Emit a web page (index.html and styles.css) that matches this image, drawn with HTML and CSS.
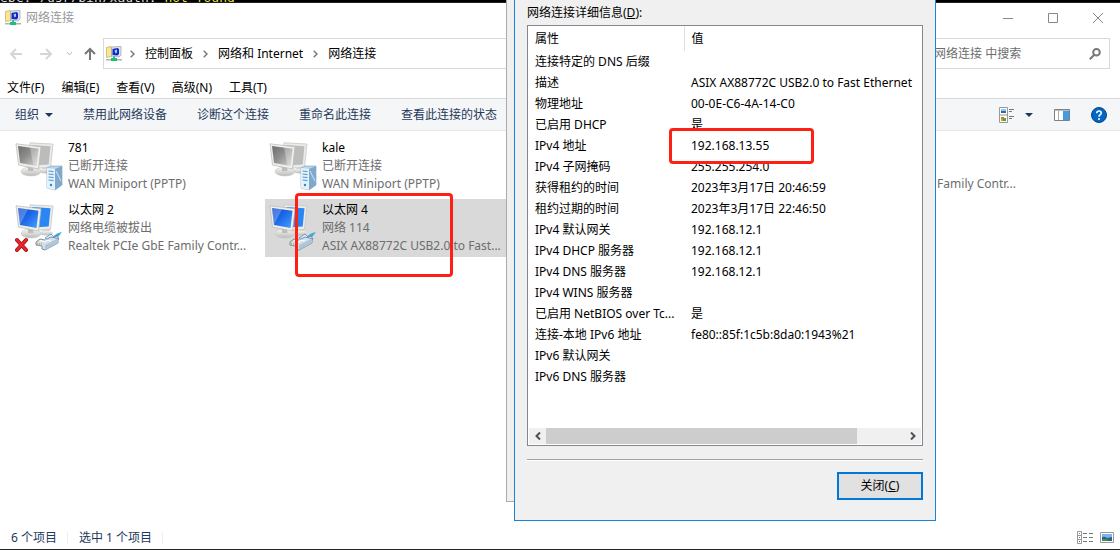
FILE: index.html
```html
<!DOCTYPE html>
<html lang="zh-CN">
<head>
<meta charset="utf-8">
<title>网络连接</title>
<link rel="stylesheet" href="styles.css">
</head>
<body>
<svg class="defs" aria-hidden="true">
  <defs>
    <linearGradient id="blue" x1="0" y1="0" x2="1" y2="1"><stop offset="0" stop-color="#0a48c8"/><stop offset=".45" stop-color="#1c66e8"/><stop offset="1" stop-color="#45a2ff"/></linearGradient>
    <linearGradient id="grey" x1="0" y1="0" x2="1" y2="1"><stop offset="0" stop-color="#6c6c6c"/><stop offset=".45" stop-color="#8e8e8e"/><stop offset="1" stop-color="#d4d4d4"/></linearGradient>
    <linearGradient id="base" x1="0" y1="0" x2="0" y2="1"><stop offset="0" stop-color="#f7f7f5"/><stop offset="1" stop-color="#bcbcba"/></linearGradient>
    <symbol id="net" viewBox="0 0 16 16">
      <path d="M.5 1.500l4.500-1 1 1v9l-5.500 1z" fill="#f8e596" stroke="#c9a94a" stroke-width=".7"/>
      <path d="M5.500 1l9.500-.7v8.700l-2 2-7.500-1z" fill="#dde2ea" stroke="#98a0ae" stroke-width=".7"/>
      <path d="M6.500 3l5-1 1.500 1v5l-1.500 1.500-5-.5z" fill="#1428c8"/>
      <path d="M8.500 4.500l2.500-1v3l-1.500 1z" fill="#9cd8ff"/>
      <path d="M7 10.500h2v1.500h2v3H5v-3h2z" fill="#19c07e"/>
      <path d="M0 13h5v1.500H0zM11 13h5v1.500h-5z" fill="#a9b3b3"/>
    </symbol>
    <symbol id="screens" viewBox="0 0 48 50">
      <path d="M28 24h6l1 5h-8z" fill="#c8c8c6"/>
      <ellipse cx="31" cy="29" rx="7" ry="2.500" fill="url(#base)"/>
      <path d="M15 .8l23 1.200-2.500 23.500-20.500 1z" fill="#ebebe8" stroke="#c2c2bf" stroke-width=".7"/>
      <path d="M17 3l18.500 1.200-1.800 18.300-16.700 1z" fill="currentColor"/>
      <path d="M12 23h8l1 7h-9z" fill="#d0d0cd"/>
      <ellipse cx="16" cy="29.500" rx="10" ry="4.500" fill="url(#base)" stroke="#c4c4c1" stroke-width=".5"/>
      <path d="M13 24h5l.5 5h-5.500z" fill="#bdbdba"/>
      <path d="M1 1.800l25 3-2.500 22.200L3.500 23z" fill="#efefec" stroke="#b8b8b5" stroke-width=".7"/>
    </symbol>
    <symbol id="server" viewBox="0 0 48 50">
      <path d="M32 26l4-2h11v19l-7 5-8-2z" fill="#b9d5ea" stroke="#7f9cb8" stroke-width=".6"/>
      <path d="M32 26l8 1v21l-8-2z" fill="#e6f2fb"/>
      <path d="M40 27l7-3v19l-7 5z" fill="#7fa9cc"/>
      <path d="M33.500 29l5 .6M33.500 32l5 .6M33.500 35l5 .6M33.500 38l5 .6" stroke="#55a2d6" stroke-width="1.200"/>
      <circle cx="36" cy="43" r="1.200" fill="#3288c7"/>
      <path d="M41 29l5 10" stroke="#cfe5f5"/>
    </symbol>
    <symbol id="plug" viewBox="0 0 48 50">
      <path d="M38 33q3-4 9-5l-4 5-3 2z" fill="#35a9de"/>
      <path d="M30 34l6-4 3 3 3-1 2 3-8 3z" fill="#e2eff8" stroke="#5c86ad" stroke-width=".8"/>
      <path d="M21 38l4-3 5 1 6-3 7 1.500v4.500l-13 7-3-1v-3l-6-1z" fill="#d5e0ea" stroke="#587693" stroke-width=".8"/>
      <path d="M30 41l13-6.500v4.500l-13 7z" fill="#b0c5d8"/>
      <path d="M25 36.500l6 1.500M30 36l6 1" stroke="#fff" stroke-width="1.200"/>
      <path d="M22.500 38.500v2.500M24.500 39v2.500M26.500 39v3" stroke="#c5b65e" stroke-width=".9"/>
    </symbol>
    <symbol id="dev-off" viewBox="0 0 48 50">
      <use href="#screens" width="48" height="50" color="#bcbcbc"/>
      <path d="M3 4l20.500 2.700-2 17.300L5 21z" fill="url(#grey)"/><path d="M15 5.600l8.500 1.100-2 17.300-3-.5z" fill="#fff" opacity=".3"/>
      <use href="#server" width="48" height="50"/>
    </symbol>
    <symbol id="dev-on" viewBox="0 0 48 50">
      <use href="#screens" width="48" height="50" color="#2a86f4"/>
      <path d="M3 4l20.500 2.700-2 17.300L5 21z" fill="url(#blue)"/><path d="M3 4l10 1.300L7 17l-2 4z" fill="#fff" opacity=".25"/>
      <use href="#plug" width="48" height="50"/>
    </symbol>
    <symbol id="sep" viewBox="0 0 5 8"><path d="M.7.700L4 4 .7 7.300" fill="none" stroke="#777" stroke-width="1.400"/></symbol>
    <symbol id="tri" viewBox="0 0 8 4"><path d="M0 0h8L4 4z" fill="#1e395b"/></symbol>
  </defs>
</svg>

<div class="terminal">ebc: /usr/bin/xauth: <span class="warn">not found</span></div>

<main class="explorer">
  <header class="titlebar">
    <svg class="net"><use href="#net"/></svg>
    <span class="title">网络连接</span>
    <button class="winbtn" aria-label="最小化"><svg viewBox="0 0 12 12"><path d="M1 6.500h10"/></svg></button>
    <button class="winbtn" aria-label="最大化"><svg viewBox="0 0 12 12"><path d="M1.500 1.500h9v9h-9z"/></svg></button>
    <button class="winbtn" aria-label="关闭窗口"><svg viewBox="0 0 12 12"><path d="M1 1l10 10M11 1L1 11"/></svg></button>
  </header>

  <div class="navbar">
    <button class="nav" aria-label="后退"><svg width="12" height="12" viewBox="0 0 12 12"><path d="M12 6H1M6 1L1 6l5 5" stroke="#d6d6d6"/></svg></button>
    <button class="nav" aria-label="前进"><svg width="12" height="12" viewBox="0 0 12 12"><path d="M0 6h11M6 1l5 5-5 5" stroke="#d6d6d6"/></svg></button>
    <button class="nav recent" aria-label="最近"><svg width="7" height="6" viewBox="0 0 7 6"><path d="M1 1l2.500 3L6 1" stroke="#bbb"/></svg></button>
    <button class="nav up" aria-label="上移"><svg width="12" height="14" viewBox="0 0 12 14"><path d="M6 13V2M1 7l5-5 5 5" stroke="#777" stroke-width="2"/></svg></button>
    <nav class="address">
      <svg class="net"><use href="#net"/></svg>
      <svg class="sep"><use href="#sep"/></svg>
      <a href="#">控制面板</a>
      <svg class="sep"><use href="#sep"/></svg>
      <a href="#">网络和 Internet</a>
      <svg class="sep"><use href="#sep"/></svg>
      <a href="#">网络连接</a>
    </nav>
    <label class="search">
      <input type="text" placeholder="在 网络连接 中搜索" aria-label="搜索">
      <svg width="12" height="12" viewBox="0 0 12 12"><circle cx="7.500" cy="4.300" r="3.300"/><path d="M5 7L.8 11.200"/></svg>
    </label>
  </div>

  <div class="menubar">
    <button>文件(F)</button><button>编辑(E)</button><button>查看(V)</button><button>高级(N)</button><button>工具(T)</button>
  </div>

  <div class="toolbar">
    <button class="organize">组织 <svg class="tri"><use href="#tri"/></svg></button>
    <button>禁用此网络设备</button>
    <button>诊断这个连接</button>
    <button>重命名此连接</button>
    <button>查看此连接的状态</button>
    <div class="tools">
      <button class="views" aria-label="更改视图">
        <svg width="16" height="16" viewBox="0 0 16 16"><path d="M.5.500h8v15h-8zM.5 8h8" fill="#fff" stroke="#999"/><path d="M2 2h5v2H2z" fill="#8ec5f2"/><path d="M2 4h5v2H2z" fill="#2b6c9c"/><path d="M2 10h3v2H2z" fill="#d2793a"/><path d="M4 11h3v3H4z" fill="#5ca52d"/><path d="M2 12h2v2H2z" fill="#d1a626"/><path d="M10 2.500h5M10 4.500h3M10 9.500h5M10 11.500h3" stroke="#777"/></svg>
        <svg class="tri"><use href="#tri"/></svg>
      </button>
      <button aria-label="预览窗格"><svg width="16" height="12" viewBox="0 0 16 12"><path d="M.5.500h15v11H.5z" fill="#fff" stroke="#808080"/><path d="M1 1h14" stroke="#808080"/><path d="M4.500 2v9" stroke="#aaa"/><path d="M9 2h6v9H9z" fill="#429ce3"/></svg></button>
      <button aria-label="帮助"><svg width="16" height="16" viewBox="0 0 16 16"><circle cx="8" cy="8" r="7.500" fill="#0067c5" stroke="#094584"/><path d="M5.800 6.200Q5.800 4 8 4t2.200 2Q10.200 7.200 8.900 8 8 8.600 8 9.800" fill="none" stroke="#fff" stroke-width="1.600"/><circle cx="8" cy="12" r="1" fill="#fff"/></svg></button>
    </div>
  </div>

  <section class="items">
    <article class="tile"><svg class="dev"><use href="#dev-off"/></svg><div><h2>781</h2><p>已断开连接</p><p>WAN Miniport (PPTP)</p></div></article>
    <article class="tile"><svg class="dev"><use href="#dev-off"/></svg><div><h2>kale</h2><p>已断开连接</p><p>WAN Miniport (PPTP)</p></div></article>
    <article class="tile"></article>
    <article class="tile last"><p>Realtek PCIe GbE Family Contr...</p></article>
    <article class="tile"><svg class="dev"><use href="#dev-on"/><path d="M2 36l9 10M11 36L2 46" stroke="#a90d12" stroke-width="4" stroke-linecap="round"/><path d="M2 36l9 10M11 36L2 46" stroke="#e8262c" stroke-width="2.500" stroke-linecap="round"/></svg><div><h2>以太网 2</h2><p>网络电缆被拔出</p><p>Realtek PCIe GbE Family Contr...</p></div></article>
    <article class="tile selected"><svg class="dev"><use href="#dev-on"/></svg><div><h2>以太网 4</h2><p>网络 114</p><p>ASIX AX88772C USB2.0 to Fast...</p></div></article>
  </section>

  <footer class="status">
    <span>6 个项目</span>
    <span>选中 1 个项目</span>
    <div class="modes">
      <button aria-label="详细信息"><svg width="16" height="13" viewBox="0 0 16 13"><path d="M.5.500h4v12h-4zM.5 4.500h4M.5 8.500h4" fill="#fff" stroke="#999"/><path d="M2 2.500h1" stroke="#4a9"/><path d="M2 6.500h1" stroke="#38c"/><path d="M2 10.500h1" stroke="#c22"/><path d="M6 2.500h4M12 2.500h4M6 6.500h4M12 6.500h4M6 10.500h4M12 10.500h4" stroke="#777"/></svg></button>
      <button aria-label="大图标"><svg width="14" height="11" viewBox="0 0 14 11"><path d="M.5.500h13v10H.5z" fill="#fff" stroke="#999"/><path d="M2 2h10v4H2z" fill="#79b4f5"/><path d="M2 5q3-1 5 1l5-1v4H2z" fill="#2d6385"/><path d="M2 7h6l-1 2H2z" fill="#4b8a53"/></svg></button>
    </div>
  </footer>
</main>

<div class="backdialog"></div>

<section class="dialog">
  <h1>网络连接详细信息(<u>D</u>):</h1>
  <div class="list">
    <table>
      <thead><tr><th>属性</th><th>值</th></tr></thead>
      <tbody>
        <tr><td>连接特定的 DNS 后缀</td><td></td></tr>
        <tr><td>描述</td><td>ASIX AX88772C USB2.0 to Fast Ethernet</td></tr>
        <tr><td>物理地址</td><td>00-0E-C6-4A-14-C0</td></tr>
        <tr><td>已启用 DHCP</td><td>是</td></tr>
        <tr><td>IPv4 地址</td><td>192.168.13.55</td></tr>
        <tr><td>IPv4 子网掩码</td><td>255.255.254.0</td></tr>
        <tr><td>获得租约的时间</td><td>2023年3月17日 20:46:59</td></tr>
        <tr><td>租约过期的时间</td><td>2023年3月17日 22:46:50</td></tr>
        <tr><td>IPv4 默认网关</td><td>192.168.12.1</td></tr>
        <tr><td>IPv4 DHCP 服务器</td><td>192.168.12.1</td></tr>
        <tr><td>IPv4 DNS 服务器</td><td>192.168.12.1</td></tr>
        <tr><td>IPv4 WINS 服务器</td><td></td></tr>
        <tr><td>已启用 NetBIOS over Tc...</td><td>是</td></tr>
        <tr><td>连接-本地 IPv6 地址</td><td>fe80::85f:1c5b:8da0:1943%21</td></tr>
        <tr><td>IPv6 默认网关</td><td></td></tr>
        <tr><td>IPv6 DNS 服务器</td><td></td></tr>
      </tbody>
    </table>
    <div class="scrollbar">
      <button aria-label="向左滚动"><svg width="6" height="8" viewBox="0 0 6 8"><path d="M5 .5L1.500 4 5 7.500"/></svg></button>
      <div class="track"><div class="thumb"></div></div>
      <button aria-label="向右滚动"><svg width="6" height="8" viewBox="0 0 6 8"><path d="M1 .5L4.500 4 1 7.500"/></svg></button>
    </div>
  </div>
  <hr>
  <button class="close">关闭(<u>C</u>)</button>
</section>

<div class="mark mark-adapter"></div>
<div class="mark mark-address"></div>
</body>
</html>
```

FILE: styles.css
```css
* { box-sizing: border-box; }
body {
  margin: 0;
  min-height: 100vh;
  display: flex;
  flex-direction: column;
  position: relative;
  overflow: hidden;
  background: #fff;
  color: #000;
  font: 12px/18px "Noto Sans", "Noto Sans CJK SC", sans-serif;
}
button { border: 0; padding: 0; background: none; color: inherit; font: inherit; white-space: nowrap; }
svg { display: block; flex: none; fill: none; }
h1, h2, p { margin: 0; font-size: 12px; font-weight: 400; }
a { color: inherit; text-decoration: none; }
.defs { position: absolute; width: 0; height: 0; }

.terminal {
  height: 3px;
  display: flex;
  align-items: flex-end;
  overflow: hidden;
  background: #000;
  border-bottom: 1px solid #222;
  color: #ddd;
  font: 13px/8px "DejaVu Sans Mono", monospace;
  white-space: pre;
}
.warn { color: #e8e337; }

.explorer { flex: 1; display: flex; flex-direction: column; border-bottom: 1px solid #222; }
.net { width: 16px; height: 16px; }

.titlebar { height: 35px; padding: 0 10px 6px 5px; display: flex; align-items: center; color: #999; }
.title { flex: 1; margin-left: 5px; }
.winbtn { width: 45px; display: flex; justify-content: flex-end; }
.winbtn svg { width: 12px; height: 12px; margin-right: 6px; stroke: #888; }

.navbar { display: flex; align-items: stretch; padding: 0 10px; height: 31px; }
.nav { width: 30px; display: flex; align-items: center; }
.nav svg { stroke-width: 2; }
.nav.recent { width: 14px; }
.nav.recent svg { stroke-width: 1; }
.nav.up { width: 19px; }
.nav.recent svg { margin-left: -4px; }
.address { flex: 1; display: flex; align-items: center; padding-left: 2px; border: 1px solid #d9d9d9; white-space: nowrap; }
.sep { width: 5px; height: 8px; margin: 0 10px; }
.address .net + .sep { margin-left: 8px; }
.search { width: 200px; margin-left: 6px; display: flex; align-items: center; padding: 0 8px; border: 1px solid #d9d9d9; }
.search input { flex: 1; min-width: 0; padding: 0; border: 0; outline: 0; font: inherit; background: none; }
.search input::placeholder { color: #6d6d6d; opacity: 1; }
.search svg { stroke: #777; stroke-width: 2; }

.menubar { display: flex; gap: 17px; height: 29px; padding: 10px 7px 1px; }

.toolbar {
  display: flex;
  align-items: center;
  gap: 30px;
  height: 33px;
  padding: 0 13px 0 15px;
  background: #f5f6f7;
  border-top: 1px solid #d8d8d8;
  border-bottom: 1px solid #e5e7ea;
  color: #1e395b;
}
.tri { width: 8px; height: 4px; }
.organize, .views { display: flex; align-items: center; gap: 6px; }
.views { gap: 10px; }
.tools { margin-left: auto; display: flex; align-items: center; gap: 21px; }

.items { flex: 1; display: grid; grid-template-columns: repeat(4, 254px); grid-auto-rows: 58px; row-gap: 4px; padding: 6px 0 0 11px; }
.tile { display: flex; gap: 5px; padding: 2px 0 0 4px; white-space: nowrap; }
.tile.selected { background: #d9d9d9; }
.tile p { color: #6d6d6d; }
.dev { width: 48px; height: 50px; margin-top: 3px; }
.tile.last { justify-content: flex-end; align-items: flex-end; padding-right: 11px; padding-bottom: 2px; }

.status { display: flex; align-items: center; height: 23px; padding: 0 6px 0 11px; color: #1e395b; }
.status span { padding-right: 10px; margin-right: 11px; border-right: 1px solid #eee; line-height: 12px; }
.modes { margin-left: auto; display: flex; align-items: center; gap: 7px; }

.backdialog { position: absolute; left: 506px; top: 0; width: 420px; height: 502px; background: #f0f0f0; border: 1px solid #aaa; border-top: 0; }
.dialog {
  position: absolute;
  left: 514px;
  top: 0;
  width: 422px;
  display: flex;
  flex-direction: column;
  padding: 4px 12px 20px;
  background: #f0f0f0;
  border: 1px solid #1883d7;
  border-top: 0;
}
.dialog h1 { margin-bottom: 3px; }
.list { border: 1px solid #828790; background: #fff; overflow: hidden; }
.list table { width: 100%; margin-bottom: 41px; border-collapse: collapse; table-layout: fixed; white-space: nowrap; }
.list th { height: 25px; padding: 0 0 0 7px; font-weight: 400; text-align: left; }
.list th:first-child { width: 156px; }
.list th + th { padding-left: 7px; border-left: 1px solid #e0e0e0; }
.list td { height: 21px; padding: 0 0 0 7px; }
.scrollbar { display: flex; margin: 0 1px 1px; height: 16px; background: #f0f0f0; }
.scrollbar button { width: 17px; display: flex; align-items: center; justify-content: center; }
.scrollbar svg { stroke: #505050; stroke-width: 2; }
.track { flex: 1; display: flex; }
.thumb { width: 87%; background: #cdcdcd; }
.dialog hr { width: 100%; height: 2px; margin: 13px 0 11px; border: 0; border-top: 1px solid #a0a0a0; border-bottom: 1px solid #fff; }
.close { align-self: flex-end; width: 86px; height: 28px; background: #e1e1e1; border: 2px solid #0078d7; }

.mark { position: absolute; border: 3px solid #ff2015; border-radius: 4px; }
.mark-adapter { left: 295px; top: 193px; width: 158px; height: 84px; }
.mark-address { left: 669px; top: 128px; width: 145px; height: 36px; }
```
